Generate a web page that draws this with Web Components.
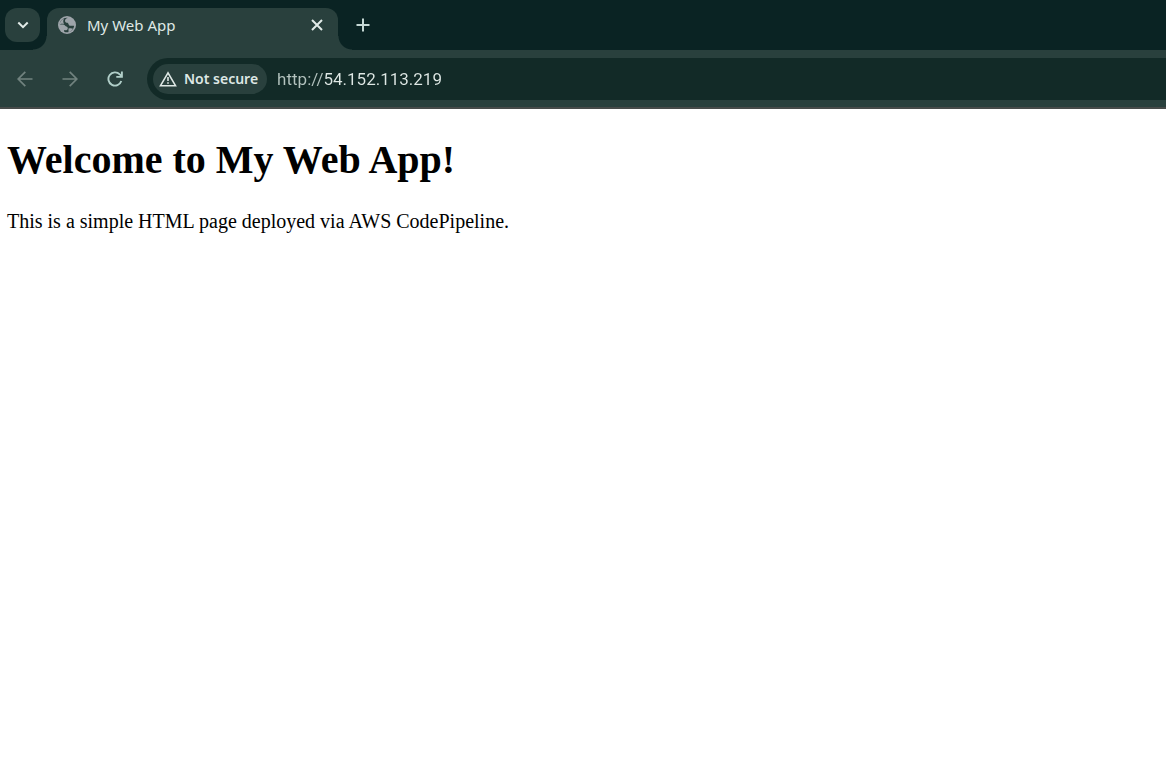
<!DOCTYPE html>
<html lang="en">
<head>
<meta charset="utf-8">
<title>My Web App</title>
<style>
  html, body { margin: 0; min-height: 100%; background: #fff; }
</style>
</head>
<body>
<browser-window>
  <tab-strip slot="tabs"><browser-tab>My Web App</browser-tab></tab-strip>
  <tool-bar slot="toolbar"><address-bar url="http://54.152.113.219">Not secure</address-bar></tool-bar>
  <web-page>
    <span slot="heading">Welcome to My Web App!</span>
    <span slot="text">This is a simple HTML page deployed via AWS CodePipeline.</span>
  </web-page>
</browser-window>
<script>
const reset = `
  :host, * { box-sizing: border-box; }
  svg { display: block; flex: none; }
  button { display: flex; align-items: center; justify-content: center; margin: 0; padding: 0; border: 0; background: none; color: inherit; font: inherit; }
`;
function define(name, markup, setup) {
  const template = document.createElement('template');
  template.innerHTML = markup;
  customElements.define(name, class extends HTMLElement {
    constructor() {
      super();
      this.attachShadow({ mode: 'open' }).append(template.content.cloneNode(true));
    }
    connectedCallback() { if (setup) setup(this); }
  });
}

define('browser-window', `
  <style>
    :host { display: flex; flex-direction: column; min-height: 100vh; font-family: "Noto Sans", "Open Sans", sans-serif; color: #dfe8e5; }
  </style>
  <slot name="tabs"></slot>
  <slot name="toolbar"></slot>
  <slot></slot>`);

define('tab-strip', `
  <style>${reset}
    :host { display: flex; height: 50px; padding: 8px 0 0 5px; background: #0a2323; }
    .search { width: 35px; height: 34px; border-radius: 12px; background: #29403d; margin-right: 7px; }
    .new { width: 34px; height: 34px; margin-left: 8px; color: #c5d8d4; }
  </style>
  <button class="search" aria-label="Search tabs">
    <svg width="12" height="8" viewBox="0 0 12 8" fill="none" stroke="#e2ebe8" stroke-width="2"><path d="M1.3 1.5 6 6.2l4.700-4.700"/></svg>
  </button>
  <slot></slot>
  <button class="new" aria-label="New tab">
    <svg width="14" height="14" viewBox="0 0 14 14" fill="none" stroke="currentColor" stroke-width="2"><path d="M7 .5v13M.5 7h13"/></svg>
  </button>`);

define('browser-tab', `
  <style>${reset}
    :host { position: relative; display: flex; align-items: center; width: 291px; height: 42px; padding: 0 12px 8px 11px; border-radius: 12px 12px 0 0; background: #29403d; font-size: 15px; line-height: 20px; }
    :host::before, :host::after { content: ""; position: absolute; bottom: 0; width: 14px; height: 14px; }
    :host::before { right: 100%; background: radial-gradient(circle at 0 0, transparent 13px, #29403d 14px); }
    :host::after { left: 100%; background: radial-gradient(circle at 100% 0, transparent 13px, #29403d 14px); }
    .title { flex: 1; margin-left: 11px; white-space: nowrap; }
    button { width: 18px; height: 18px; }
  </style>
  <svg width="18" height="18" viewBox="0 0 18 18"><circle cx="9" cy="9" r="9" fill="#9ea4aa"/><path fill="#29403d" d="M9.800 1.900C8.200 2.200 7 3.200 7 4.800c0 1 .6 1.800 1.700 1.900 1.200 0 1.700.6 1.900 1.600.2 1.100 1 1.500 2.200 1.500h3.300c-.2 3.300-2.900 6.200-6.400 6.500-1.500.1-2.500-.2-3.500-.6v-1.600c1.300.3 2.600.1 3.200-.7.600-.8.500-2.200-.5-2.700-.8-.4-1.400-.5-1.900-1.200-.7-.9-1.400-1.100-2.700-1.100H1.800c.2-3.800 3.700-7.200 8-6.500z"/><path fill="#9ea4aa" d="M1.500 9c.3-3 2-5.400 4.500-6.500C5 4.500 5 6.500 6.200 7.800H3zM10.500 12.500c1.500-.4 3.500-.5 4.500.3-1 2-2.500 3-4.500 3.500z"/></svg>
  <span class="title"><slot></slot></span>
  <button aria-label="Close tab">
    <svg width="12" height="12" viewBox="0 0 12 12" fill="none" stroke="#e2ebe8" stroke-width="2"><path d="m1 1 10 10M11 1 1 11"/></svg>
  </button>`);

define('tool-bar', `
  <style>${reset}
    :host { display: flex; align-items: center; height: 59px; padding: 0 0 0 9px; background: #29403d; border-bottom: 2px solid #474b4a; color: #71827f; }
    nav { display: flex; gap: 13px; margin-right: 16px; }
    button { width: 32px; height: 42px; }
    .reload { color: #b1cfc9; }
  </style>
  <nav aria-label="Page navigation">
    <button aria-label="Back" disabled><svg width="16" height="16" viewBox="0 0 16 16" fill="none" stroke="#71827f" stroke-width="1.700"><path d="M15.500 8H1.500M8.300.9 1.200 8l7.100 7.100"/></svg></button>
    <button aria-label="Forward" disabled><svg width="16" height="16" viewBox="0 0 16 16" fill="none" stroke="#71827f" stroke-width="1.700"><path d="M.5 8h14M7.700.9 14.800 8l-7.100 7.100"/></svg></button>
    <button class="reload" aria-label="Reload"><svg width="16" height="16" viewBox="0 0 16 16" fill="none" stroke="currentColor" stroke-width="1.900"><path d="M14.300 10A6.600 6.600 0 1 1 12.800 3.400L15 5.600M14.900 .4v5.500H9.300"/></svg></button>
  </nav>
  <slot></slot>`);

define('address-bar', `
  <style>${reset}
    :host { display: flex; align-items: center; height: 42px; flex: 1; padding-left: 6px; border-radius: 21px 0 0 21px; background: #122a27; color: #dfe8e5; }
    .chip { height: 30px; padding: 0 9px 0 6px; gap: 7px; border-radius: 15px; background: #29403d; font-size: 14px; line-height: 20px; font-weight: 600; white-space: nowrap; }
    input { flex: 1; min-width: 0; height: 30px; margin: 0 0 0 10px; padding: 0; border: 0; outline: 0; font: 17px/24px Roboto, "Noto Sans", sans-serif; color: #dfe8e5; -webkit-text-fill-color: transparent; background: linear-gradient(90deg, #b4c3bf 48px, #dfe8e5 48px); -webkit-background-clip: text; background-clip: text; }
  </style>
  <button class="chip">
    <svg width="18" height="16" viewBox="0 0 18 16"><path fill="none" stroke="#dfe8e5" stroke-width="1.600" d="M9 1.800 1.500 14.700h15z"/><path fill="#dfe8e5" d="M8.200 6h1.600v4H8.200zM8.200 11.200h1.600v1.600H8.200z"/></svg>
    <span><slot></slot></span>
  </button>
  <input type="text" aria-label="Address" spellcheck="false">`,
  host => { host.shadowRoot.querySelector('input').value = host.getAttribute('url'); });

define('web-page', `
  <style>
    :host { display: block; flex: 1; padding: 28px 7px 8px; background: #fff; color: #000; font-family: "Liberation Serif", "Times New Roman", serif; }
    h1 { margin: 0 0 26px; font-size: 40px; line-height: 46px; }
    p { margin: 0; font-size: 20px; line-height: 24px; }
  </style>
  <h1><slot name="heading"></slot></h1>
  <p><slot name="text"></slot></p>`);
</script>
</body>
</html>
